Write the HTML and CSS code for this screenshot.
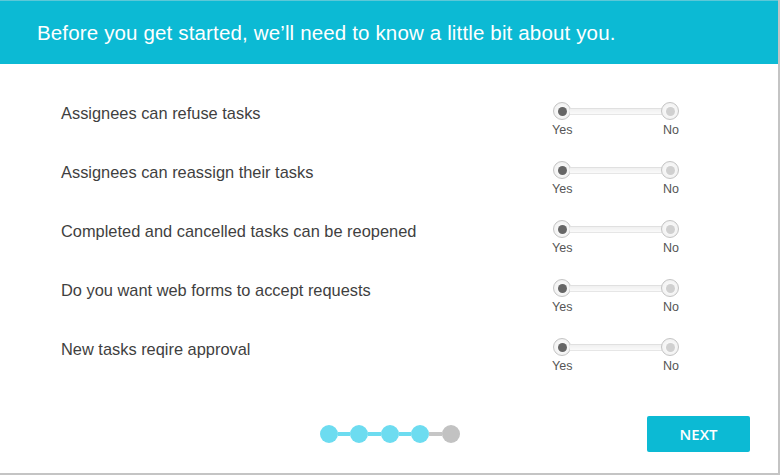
FILE: index.html
```html
<!DOCTYPE html>
<html>
<head>
<meta charset="utf-8">
<link rel="stylesheet" href="styles.css">
</head>
<body>
<div class="frame">
  <header class="header">
    <h1 class="title">Before you get started, we’ll need to know a little bit about you.</h1>
  </header>
  <main class="rows">
    <div class="row">
      <div class="label">Assignees can refuse tasks</div>
      <div class="toggle">
        <div class="track"><span class="knob on"></span><span class="bar"></span><span class="knob off"></span></div>
        <div class="opts"><span>Yes</span><span>No</span></div>
      </div>
    </div>
    <div class="row">
      <div class="label">Assignees can reassign their tasks</div>
      <div class="toggle">
        <div class="track"><span class="knob on"></span><span class="bar"></span><span class="knob off"></span></div>
        <div class="opts"><span>Yes</span><span>No</span></div>
      </div>
    </div>
    <div class="row">
      <div class="label">Completed and cancelled tasks can be reopened</div>
      <div class="toggle">
        <div class="track"><span class="knob on"></span><span class="bar"></span><span class="knob off"></span></div>
        <div class="opts"><span>Yes</span><span>No</span></div>
      </div>
    </div>
    <div class="row">
      <div class="label">Do you want web forms to accept requests</div>
      <div class="toggle">
        <div class="track"><span class="knob on"></span><span class="bar"></span><span class="knob off"></span></div>
        <div class="opts"><span>Yes</span><span>No</span></div>
      </div>
    </div>
    <div class="row">
      <div class="label">New tasks reqire approval</div>
      <div class="toggle">
        <div class="track"><span class="knob on"></span><span class="bar"></span><span class="knob off"></span></div>
        <div class="opts"><span>Yes</span><span>No</span></div>
      </div>
    </div>
  </main>
  <footer class="footer">
    <div></div>
    <div class="steps">
      <span class="dot"></span><span class="link"></span>
      <span class="dot"></span><span class="link"></span>
      <span class="dot"></span><span class="link"></span>
      <span class="dot"></span><span class="link grey"></span>
      <span class="dot grey"></span>
    </div>
    <div class="btn-cell"><button class="next">NEXT</button></div>
  </footer>
</div>
</body>
</html>
```
FILE: styles.css
```css
* { box-sizing: border-box; }
html, body { margin: 0; padding: 0; background: #fff; }
.frame {
  width: 780px;
  height: 475px;
  border-right: 2px solid #c4c4c4;
  border-bottom: 2px solid #c4c4c4;
  display: flex;
  flex-direction: column;
  font-family: "Liberation Sans", Arial, sans-serif;
}
.header {
  height: 64px;
  background: #0cbad4;
  border-top: 1px solid #5cc8d8;
  display: flex;
  align-items: center;
  padding-left: 37px;
}
.title {
  margin: 0;
  color: #fff;
  font-weight: normal;
  font-size: 20.5px;
  letter-spacing: 0.15px;
}
.rows {
  padding: 36px 0 0 61px;
  display: flex;
  flex-direction: column;
}
.row {
  height: 59px;
  display: flex;
  align-items: flex-start;
}
.label {
  width: 492px;
  font-size: 16.4px;
  line-height: 26px;
  color: #3f3f3f;
}
.toggle {
  width: 126px;
  padding-top: 2px;
}
.track {
  display: flex;
  align-items: center;
  height: 18px;
}
.knob {
  width: 18px;
  height: 18px;
  border-radius: 50%;
  border: 1px solid #c4c4c4;
  background: radial-gradient(circle, #fff 0, #f2f2f2 70%, #e2e2e2 100%);
  display: flex;
  align-items: center;
  justify-content: center;
  flex: none;
}
.knob::after {
  content: "";
  width: 9px;
  height: 9px;
  border-radius: 50%;
}
.knob.on::after { background: #666; }
.knob.off::after { background: #d0d0d0; }
.bar {
  flex: 1;
  height: 7px;
  margin: 0 -1px;
  background: linear-gradient(#f0f0f0, #fafafa);
  border-top: 1px solid #e0e0e0;
  border-bottom: 1px solid #e6e6e6;
}
.opts {
  display: flex;
  justify-content: space-between;
  margin-top: 3px;
  font-size: 12.5px;
  color: #555;
}
.opts span:first-child { margin-left: -1px; }
.footer {
  margin-top: auto;
  display: grid;
  grid-template-columns: 1fr auto 1fr;
  align-items: center;
  padding-bottom: 21px;
}
.steps {
  display: flex;
  align-items: center;
  margin-left: 1px;
}
.dot {
  width: 18px;
  height: 18px;
  border-radius: 50%;
  background: #6ddcf0;
  flex: none;
}
.dot.grey { background: #c2c2c2; }
.link {
  width: 12.5px;
  height: 4px;
  background: #6ddcf0;
  flex: none;
}
.link.grey { background: #c6c6c6; }
.btn-cell {
  display: flex;
  justify-content: flex-end;
  padding-right: 28px;
}
.next {
  width: 103px;
  height: 36px;
  border: none;
  border-radius: 2px;
  background: #0cbad4;
  color: #fff;
  font-family: "Open Sans", sans-serif;
  font-weight: 600;
  font-size: 15px;
  padding: 0;
}
```
